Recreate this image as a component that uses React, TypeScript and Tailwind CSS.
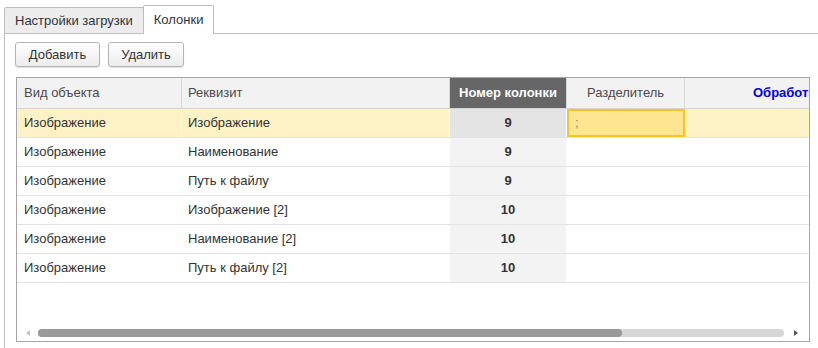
import React from "react";

const rows = [
  { kind: "Изображение", attr: "Изображение", num: "9", sep: ";", selected: true },
  { kind: "Изображение", attr: "Наименование", num: "9", sep: "", selected: false },
  { kind: "Изображение", attr: "Путь к файлу", num: "9", sep: "", selected: false },
  { kind: "Изображение", attr: "Изображение [2]", num: "10", sep: "", selected: false },
  { kind: "Изображение", attr: "Наименование [2]", num: "10", sep: "", selected: false },
  { kind: "Изображение", attr: "Путь к файлу [2]", num: "10", sep: "", selected: false },
];

export default function App() {
  return (
    <div className="w-[818px] h-[348px] overflow-hidden bg-white text-[13px] text-[#333] font-['Liberation_Sans',Arial,sans-serif]">
      {/* Tabs */}
      <div className="flex items-end h-[34px]">
        <div className="w-[4px] self-stretch" />
        <div className="h-[27px] px-[10px] flex items-center bg-[#ececec] border border-[#bdbdbd] rounded-t-[2px] text-[#2f3440]">
          Настройки загрузки
        </div>
        <div className="h-[29px] px-[10px] flex items-center bg-white border border-b-0 border-[#bdbdbd] rounded-t-[2px] -ml-px text-[#2f3440]">
          Колонки
        </div>
        <div className="flex-1 border-b border-[#bdbdbd]" />
      </div>

      {/* Panel */}
      <div className="ml-[4px] border-l border-[#bdbdbd] h-[314px] pl-[10px] pt-[8px]">
        <div className="flex gap-[8px]">
          <button className="h-[25px] w-[85px] rounded-[3px] border border-[#b5b5b5] bg-gradient-to-b from-white to-[#ececec] shadow-[0_1px_1px_rgba(0,0,0,0.12)] text-[#333]">
            Добавить
          </button>
          <button className="h-[25px] w-[76px] rounded-[3px] border border-[#b5b5b5] bg-gradient-to-b from-white to-[#ececec] shadow-[0_1px_1px_rgba(0,0,0,0.12)] text-[#333]">
            Удалить
          </button>
        </div>

        {/* Table */}
        <div className="mt-[10px] ml-px w-[794px] h-[265px] border border-[#a6a6a6] flex flex-col overflow-hidden">
          <div className="flex h-[31px] shrink-0 bg-[#f2f2f2] border-b border-[#d4d4d4] text-[#4a4a4a]">
            <div className="w-[165px] shrink-0 border-r border-[#d8d8d8] pl-[7px] flex items-center">Вид объекта</div>
            <div className="w-[268px] shrink-0 border-r border-[#d8d8d8] pl-[6px] flex items-center">Реквизит</div>
            <div className="w-[117px] shrink-0 bg-[#666] text-white font-bold flex items-center justify-center border-r border-[#d8d8d8]">Номер колонки</div>
            <div className="w-[118px] shrink-0 border-r border-[#d8d8d8] flex items-center justify-center">Разделитель</div>
            <div className="w-[300px] shrink-0 pl-[68px] flex items-center text-[#0000ee] font-bold">Обработка</div>
          </div>

          {rows.map((r, i) => (
            <div key={i} className={`flex h-[29px] shrink-0 border-b border-[#e3e3e3] ${r.selected ? "bg-[#fdf2c6]" : "bg-white"}`}>
              <div className="w-[165px] shrink-0 border-r border-white pl-[7px] flex items-center">{r.kind}</div>
              <div className="w-[268px] shrink-0 border-r border-white pl-[6px] flex items-center">{r.attr}</div>
              <div className={`w-[117px] shrink-0 border-r border-white flex items-center justify-center font-bold ${r.selected ? "bg-[#e4e4e4]" : "bg-[#f3f3f3]"}`}>
                {r.num}
              </div>
              {r.selected ? (
                <div className="w-[118px] shrink-0 border-2 border-[#f5c623] bg-[#fde592] pl-[6px] flex items-center text-[#888]">{r.sep}</div>
              ) : (
                <div className="w-[118px] shrink-0 border-r border-white flex items-center">{r.sep}</div>
              )}
              <div className="flex-1" />
            </div>
          ))}

          <div className="flex-1" />

          {/* Horizontal scrollbar */}
          <div className="h-[8px] mb-[4px] flex items-center shrink-0">
            <div className="w-[9px] shrink-0" />
            <div className="w-0 h-0 border-y-[3px] border-y-transparent border-r-[4px] border-r-[#c4c4c4]" />
            <div className="w-[8px] shrink-0" />
            <div className="w-[746px] h-[8px] rounded-full bg-[#d6d6d6] flex">
              <div className="w-[584px] h-[8px] rounded-full bg-[#999]" />
            </div>
            <div className="w-[10px] shrink-0" />
            <div className="w-0 h-0 border-y-[3px] border-y-transparent border-l-[4px] border-l-[#555]" />
          </div>
        </div>
      </div>
    </div>
  );
}
